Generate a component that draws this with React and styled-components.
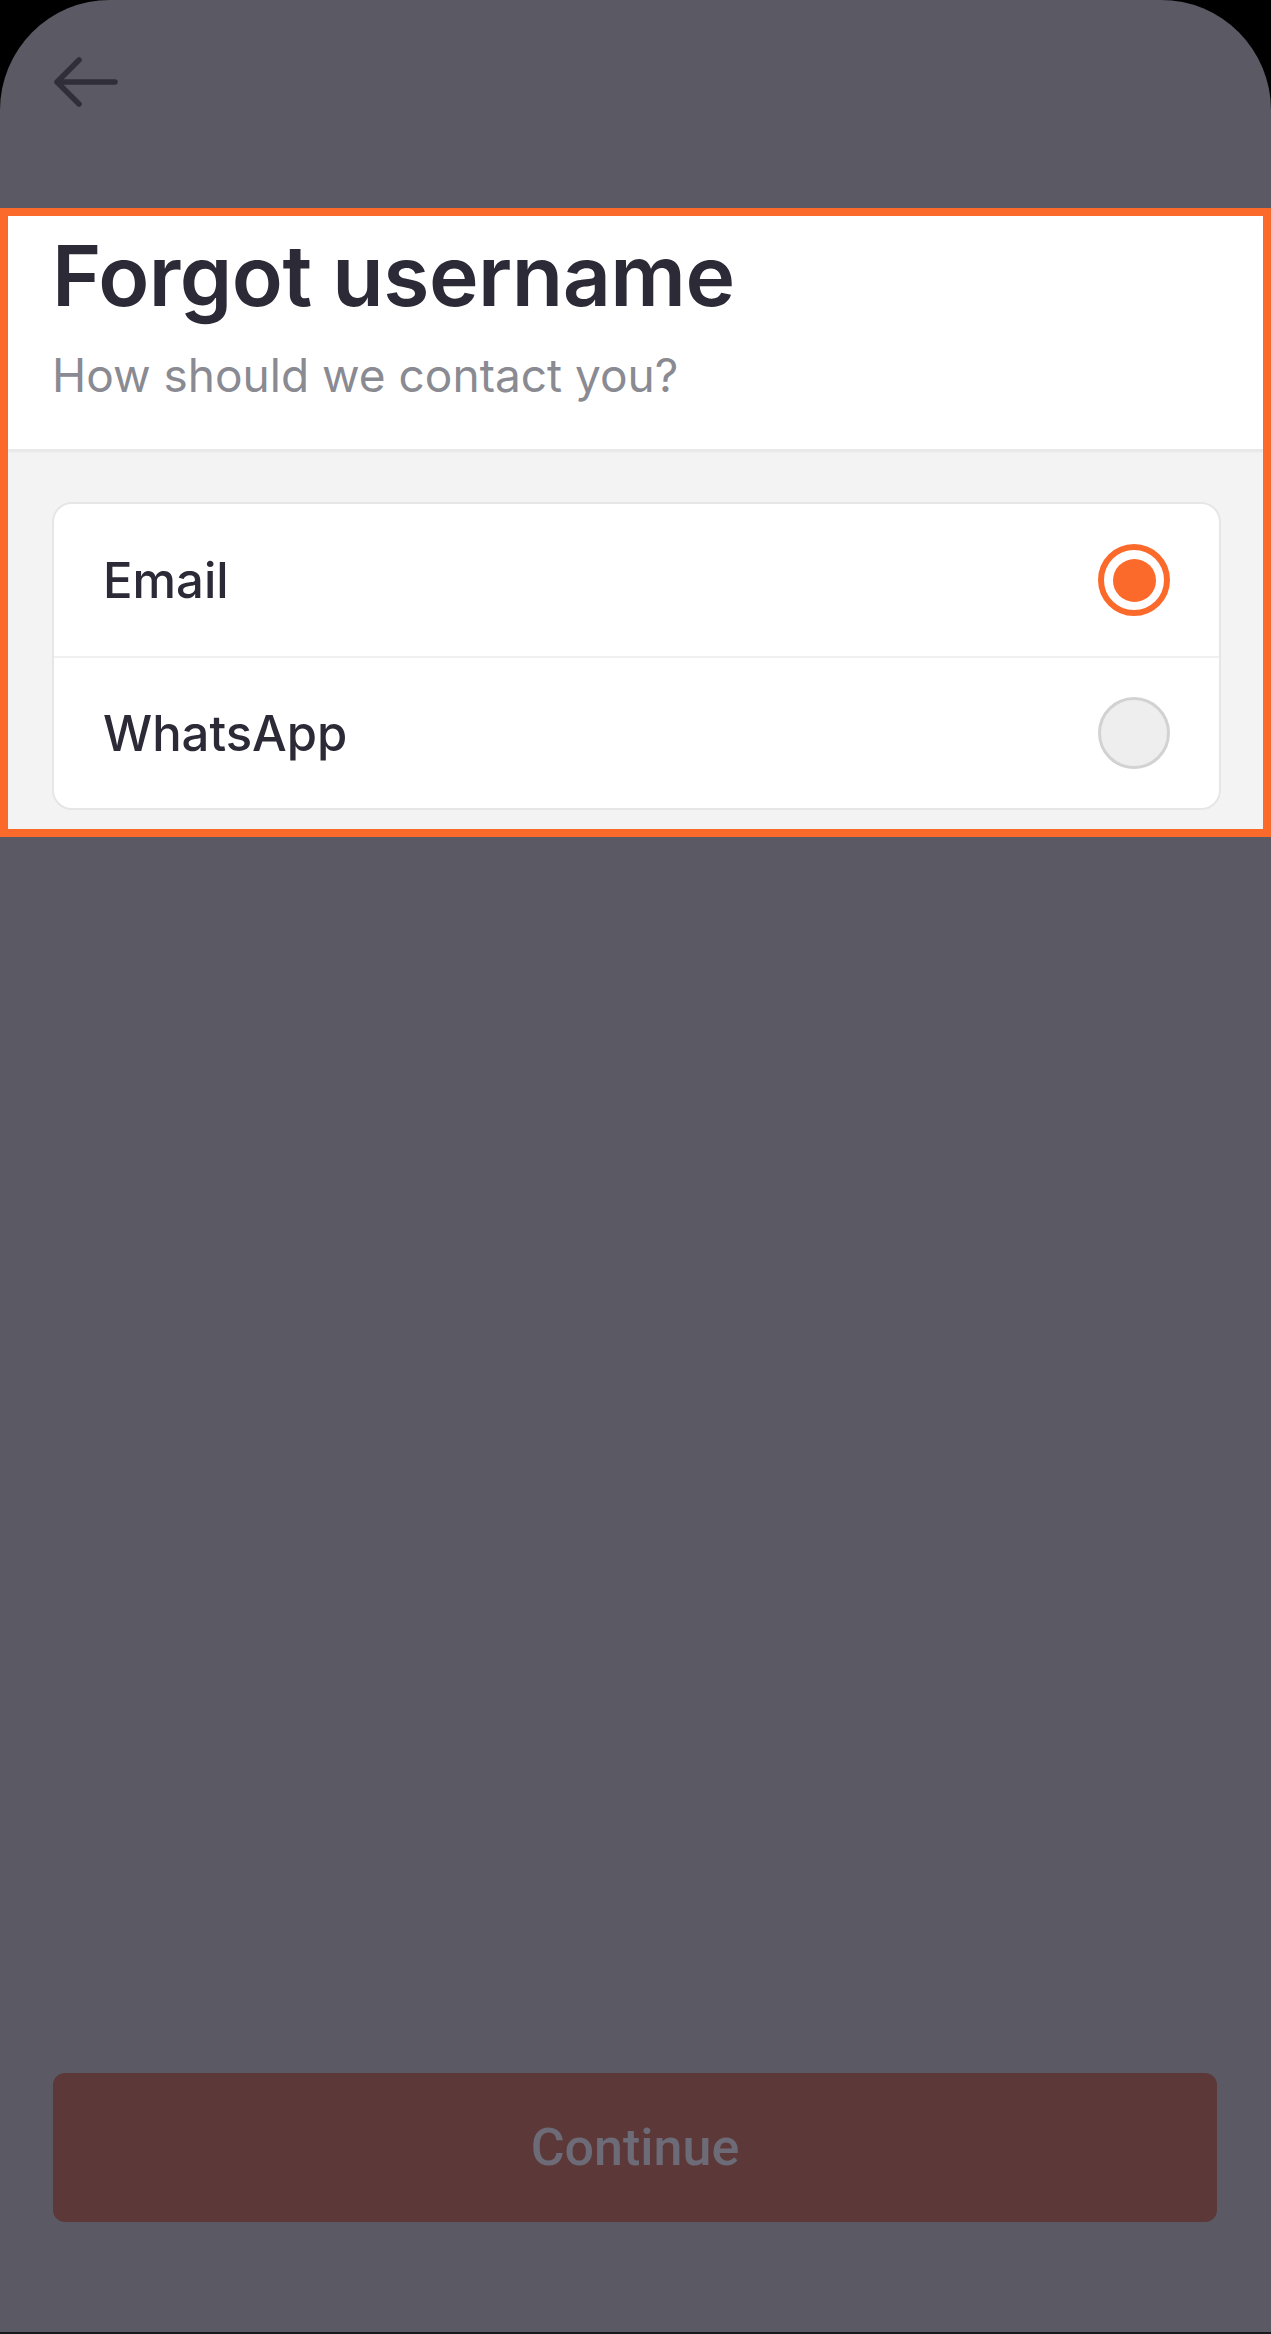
import React, { useState } from 'react';
import styled, { createGlobalStyle } from 'styled-components';

const GlobalStyle = createGlobalStyle`
  html, body {
    margin: 0;
    padding: 0;
    background: #000;
  }
  * {
    box-sizing: border-box;
  }
`;

const options = [
  { id: 'email', label: 'Email' },
  { id: 'whatsapp', label: 'WhatsApp' },
];

const App = () => {
  const [selected, setSelected] = useState('email');

  return (
    <>
      <GlobalStyle />
      <Screen>
        <TopBar>
          <BackButton aria-label="Back">
            <svg width="64" height="52" viewBox="0 0 64 52" fill="none">
              <path
                d="M3 26 H61 M25 4 L3 26 L25 48"
                stroke="#2f2e39"
                strokeWidth="5.5"
                strokeLinecap="round"
                strokeLinejoin="round"
              />
            </svg>
          </BackButton>
        </TopBar>

        <Highlight>
          <Header>
            <Title>Forgot username</Title>
            <Subtitle>How should we contact you?</Subtitle>
          </Header>
          <OptionsArea>
            <OptionCard>
              {options.map((opt) => (
                <OptionRow key={opt.id} onClick={() => setSelected(opt.id)}>
                  <OptionLabel>{opt.label}</OptionLabel>
                  <Radio $checked={selected === opt.id} />
                </OptionRow>
              ))}
            </OptionCard>
          </OptionsArea>
        </Highlight>

        <Spacer />

        <Footer>
          <ContinueButton disabled>Continue</ContinueButton>
        </Footer>
      </Screen>
    </>
  );
};

export default App;

const Screen = styled.div`
  width: 1271px;
  height: 2334px;
  display: flex;
  flex-direction: column;
  background: #5b5a64;
  border-radius: 110px 110px 0 0;
  overflow: hidden;
  font-family: Inter, "Noto Sans", sans-serif;
  border-bottom: 2px solid #1a1a1e;
`;

const TopBar = styled.div`
  height: 208px;
  padding: 56px 0 0 54px;
`;

const BackButton = styled.div`
  width: 64px;
  height: 52px;
`;

const Highlight = styled.section`
  border: 8px solid #fc6a2b;
  background: #f3f3f3;
`;

const Header = styled.div`
  background: #fff;
  height: 234px;
  padding: 10px 44px 0;
  box-shadow: 0 2px 2px rgba(0, 0, 0, 0.05);
  border-bottom: 1px solid #e9e9e9;
`;

const Title = styled.h1`
  margin: 0;
  font-size: 84px;
  font-weight: 600;
  line-height: 100px;
  color: #2b2a36;
  letter-spacing: -0.5px;
`;

const Subtitle = styled.p`
  margin: 19px 0 0;
  font-size: 46px;
  font-weight: 400;
  line-height: 60px;
  color: #8a8a93;
`;

const OptionsArea = styled.div`
  padding: 52px 42px 19px 44px;
`;

const OptionCard = styled.div`
  background: #fff;
  border: 2px solid #e6e6e6;
  border-radius: 20px;
  overflow: hidden;
`;

const OptionRow = styled.div`
  height: 152px;
  display: flex;
  align-items: center;
  justify-content: space-between;
  padding: 0 49px 0 49px;
  cursor: pointer;

  & + & {
    border-top: 2px solid #f0f0f0;
  }
`;

const OptionLabel = styled.span`
  font-size: 49px;
  font-weight: 500;
  color: #2b2a36;
`;

const Radio = styled.span`
  width: 72px;
  height: 72px;
  border-radius: 50%;
  flex-shrink: 0;
  border: ${(p) => (p.$checked ? '6px solid #fc6a2b' : '3px solid #d2d2d2')};
  background: ${(p) => (p.$checked ? '#fff' : '#eeeeee')};
  display: flex;
  align-items: center;
  justify-content: center;

  &::after {
    content: '';
    display: ${(p) => (p.$checked ? 'block' : 'none')};
    width: 43px;
    height: 43px;
    border-radius: 50%;
    background: #fc6a2b;
  }
`;

const Spacer = styled.div`
  flex: 1;
`;

const Footer = styled.div`
  padding: 0 54px 110px 53px;
`;

const ContinueButton = styled.button`
  width: 100%;
  height: 149px;
  border: none;
  border-radius: 12px;
  background: #5c3938;
  color: #6c6b77;
  font-family: Roboto, "Liberation Sans", sans-serif;
  font-size: 52px;
  font-weight: 500;
`;
